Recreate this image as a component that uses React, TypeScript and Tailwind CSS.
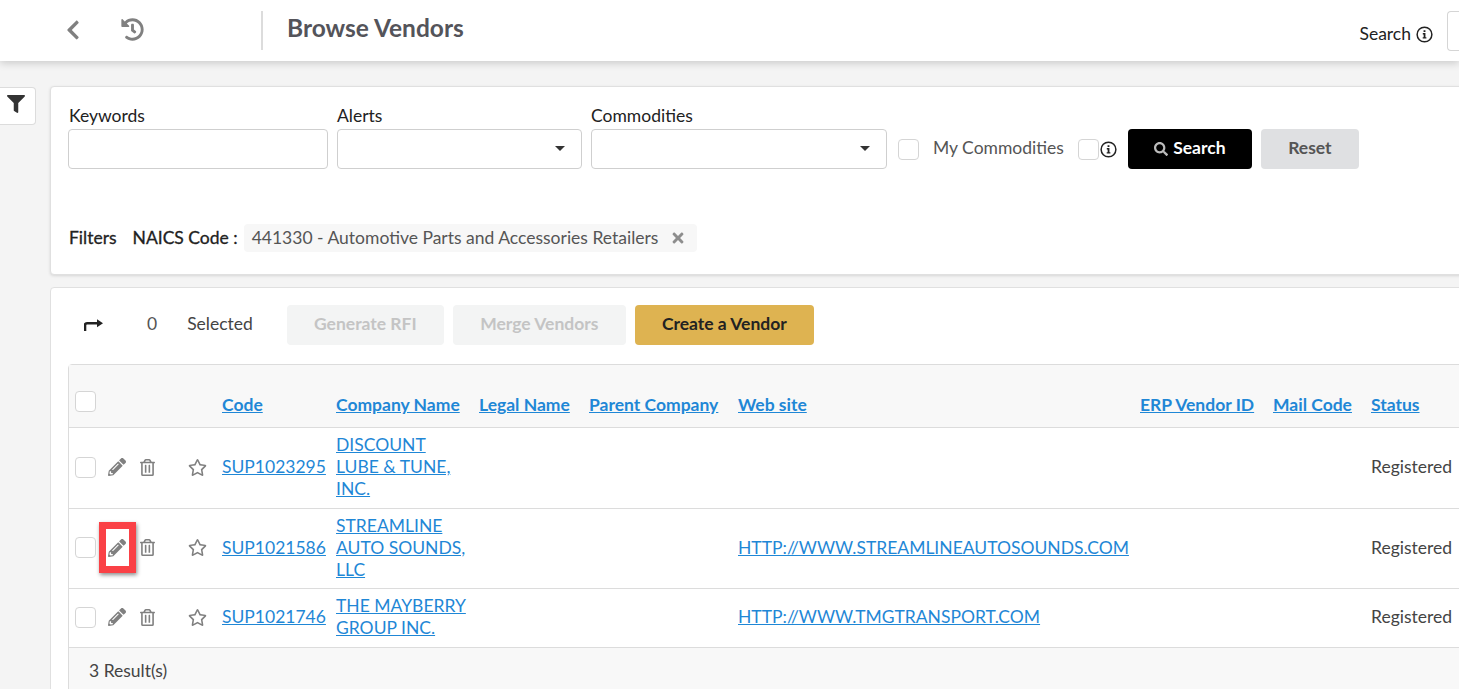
import { FaChevronLeft, FaFilter, FaHistory, FaPencilAlt, FaRegStar, FaRegTrashAlt, FaSearch, FaTimes } from "react-icons/fa";

const rows = [
  { code: "SUP1023295", name: ["DISCOUNT", "LUBE & TUNE,", "INC."], site: "", h: "h-[81px]" },
  { code: "SUP1021586", name: ["STREAMLINE", "AUTO SOUNDS,", "LLC"], site: "HTTP://WWW.STREAMLINEAUTOSOUNDS.COM", h: "h-[80px]", marked: true },
  { code: "SUP1021746", name: ["THE MAYBERRY", "GROUP INC."], site: "HTTP://WWW.TMGTRANSPORT.COM", h: "h-[59px]" },
];

const headers = ["Code", "Company Name", "Legal Name", "Parent Company", "Web site", "ERP Vendor ID", "Mail Code", "Status"];
const linkCls = "text-[#1f87d6] underline";

function InfoIcon({ size = 17 }: { size?: number }) {
  return (
    <svg width={size} height={size} viewBox="0 0 18 18" fill="none" className="shrink-0">
      <circle cx="9" cy="9" r="7.8" stroke="#222" strokeWidth="1.6" />
      <path d="M7.2 7.5h2.8v4.3h1v1.4H7.1v-1.4h1V8.9h-.9z M8 4.4h2v2h-2z" fill="#222" />
    </svg>
  );
}

function Box({ className = "" }: { className?: string }) {
  return <span className={`block w-[21px] h-[21px] rounded-[4px] border border-[#d5d5d5] bg-white shrink-0 ${className}`} />;
}

function Select({ width }: { width: string }) {
  return (
    <div className={`${width} h-10 rounded-[4px] border border-[#cfcfcf] bg-white flex items-center justify-end pr-[16px]`}>
      <span className="w-0 h-0 mb-[1px] border-x-[5px] border-x-transparent border-t-[5px] border-t-[#333]" />
    </div>
  );
}

export default function App() {
  return (
    <div className="h-[689px] w-[1459px] overflow-hidden bg-[#f4f4f4] font-['Lato','Liberation_Sans',sans-serif] text-[17.5px] text-[#333]">
      {/* header */}
      <div className="h-[61px] bg-white shadow-[0_2px_8px_rgba(0,0,0,0.18)] flex items-center relative z-10">
        <FaChevronLeft className="ml-[62px] mb-[2px] text-[#808080] text-[22px]" />
        <FaHistory className="ml-[37px] mb-[2px] text-[#808080] text-[23px]" />
        <div className="ml-[117px] w-[2px] h-[39px] bg-[#dcdcdc]" />
        <h1 className="ml-[24px] text-[24.5px] font-bold text-[#54545a] leading-none mb-[4px]">Browse Vendors</h1>
        <div className="ml-auto flex items-center mt-[7px]">
          <span className="text-[#222]">Search</span>
          <span className="ml-[5px]"><InfoIcon size={17} /></span>
          <div className="ml-[14px] w-[12px] h-10 rounded-l-[4px] border border-r-0 border-[#d5d5d5] bg-white -mt-[7px]" />
        </div>
      </div>

      <div className="flex items-start pt-[25px]">
        <div className="w-[36px] h-[38px] mt-[1px] bg-white rounded-r-[4px] border border-l-0 border-[#dcdcdc] flex items-center shrink-0">
          <FaFilter className="text-[#333] text-[18px] ml-[7px] mb-[4px]" />
        </div>

        <div className="ml-[14px] w-[1420px] shrink-0">
          {/* search card */}
          <div className="h-[189px] bg-white border border-[#e0e0e0] rounded-[4px] shadow-[0_1px_3px_rgba(0,0,0,0.12)] pl-[17px] pt-[17px]">
            <div className="flex items-end">
              <div className="w-[260px]">
                <div className="leading-[23px] pb-[2px] pl-[1px] text-[#222]">Keywords</div>
                <div className="h-10 rounded-[4px] border border-[#cfcfcf] bg-white" />
              </div>
              <div className="ml-[9px]">
                <div className="leading-[23px] pb-[2px] text-[#222]">Alerts</div>
                <Select width="w-[245px]" />
              </div>
              <div className="ml-[9px]">
                <div className="leading-[23px] pb-[2px] text-[#222]">Commodities</div>
                <Select width="w-[296px]" />
              </div>
              <div className="h-10 flex items-center">
                <Box className="ml-[11px]" />
                <span className="ml-[14px] mb-[2px] text-[#555]">My Commodities</span>
                <Box className="ml-[14px]" />
                <span className="ml-[1px]"><InfoIcon size={17} /></span>
                <button className="ml-[11px] w-[124px] h-10 pb-[2px] rounded-[4px] bg-black text-white font-bold flex items-center justify-center gap-[5px]">
                  <FaSearch className="text-[14px] text-[#bbb] mt-[1px]" />
                  Search
                </button>
                <button className="ml-[9px] w-[98px] h-10 rounded-[4px] bg-[#dfe0e2] text-[#555] font-bold pb-[2px]">Reset</button>
              </div>
            </div>
            <div className="flex items-center mt-[55px] pl-[1px]">
              <span className="text-[#222] [-webkit-text-stroke:0.3px_#222]">Filters</span>
              <span className="ml-[16px] text-[#222] [-webkit-text-stroke:0.3px_#222]">NAICS Code :</span>
              <span className="ml-[6px] h-[28px] pl-[8px] pr-[11px] rounded-[4px] bg-[#f7f7f7] text-[#555] flex items-center">
                441330 - Automotive Parts and Accessories Retailers
                <FaTimes className="ml-[12px] text-[#8d8d8d] text-[16px]" />
              </span>
            </div>
          </div>

          {/* results card */}
          <div className="mt-[12px] h-[420px] bg-white border border-[#e0e0e0] rounded-[4px] pl-[17px] pt-[17px]">
            <div className="flex items-center h-10">
              <svg width="20" height="14" viewBox="0 0 20 14" className="ml-[16px] shrink-0">
                <path d="M1 13V7.2C1 6 1.8 5.2 3 5.2h11" fill="none" stroke="#222" strokeWidth="2.6" />
                <path d="M13 1.2l6 4-6 4z" fill="#222" />
              </svg>
              <span className="ml-[43px] mb-[2px] text-[#555]">0</span>
              <span className="ml-[30px] mb-[2px] text-[#444]">Selected</span>
              <button className="ml-[34px] w-[157px] h-10 pb-[2px] rounded-[4px] bg-[#f3f4f4] text-[#c4c4c4] font-bold">Generate RFI</button>
              <button className="ml-[9px] w-[173px] h-10 pb-[2px] rounded-[4px] bg-[#f3f4f4] text-[#c4c4c4] font-bold">Merge Vendors</button>
              <button className="ml-[9px] w-[179px] h-10 pb-[2px] rounded-[4px] bg-[#deb351] text-[#222] font-bold">Create a Vendor</button>
            </div>

            {/* table */}
            <div className="mt-[19px] border border-[#dcdcdc] rounded-t-[4px] relative">
              <div className="h-[63px] bg-[#f8f8f8] border-b border-[#dcdcdc] grid grid-cols-[148px_114px_143px_110px_149px_402px_133px_98px_1fr] items-end pb-[11px] font-bold">
                <div className="pl-[6px] self-start pt-[26px]"><Box /></div>
                {headers.map((h) => (
                  <div key={h} className="pl-[5px] leading-[22px]"><a className={linkCls}>{h}</a></div>
                ))}
              </div>
              {rows.map((r) => (
                <div key={r.code} className={`${r.h} pb-[2px] border-b border-[#dcdcdc] bg-white grid grid-cols-[148px_114px_143px_110px_149px_402px_133px_98px_1fr] items-center leading-[22px] relative`}>
                  <div className="pl-[6px] flex items-center">
                    <Box />
                    <FaPencilAlt className="ml-[12px] text-[#808080] text-[18px]" />
                    <FaRegTrashAlt className="ml-[13px] text-[#808080] text-[17px]" />
                    <FaRegStar className="ml-[32px] text-[#808080] text-[19px]" />
                  </div>
                  <div className="pl-[5px]"><a className={linkCls}>{r.code}</a></div>
                  <div className="pl-[5px]">
                    {r.name.map((n) => (
                      <div key={n}><a className={linkCls}>{n}</a></div>
                    ))}
                  </div>
                  <div />
                  <div />
                  <div className="pl-[5px]">{r.site && <a className={linkCls}>{r.site}</a>}</div>
                  <div />
                  <div />
                  <div className="pl-[5px] text-[#444]">Registered</div>
                  {r.marked && (
                    <div className="absolute left-[30px] top-[13px] w-[37px] h-[51px] border-[7px] border-[#fa4146] shadow-[1px_2px_4px_rgba(0,0,0,0.45)]" />
                  )}
                </div>
              ))}
              <div className="h-[60px] bg-[#f8f8f8] pl-[20px] pt-[12px] text-[#444] leading-[22px]">3 Result(s)</div>
            </div>
          </div>
        </div>
      </div>
    </div>
  );
}
